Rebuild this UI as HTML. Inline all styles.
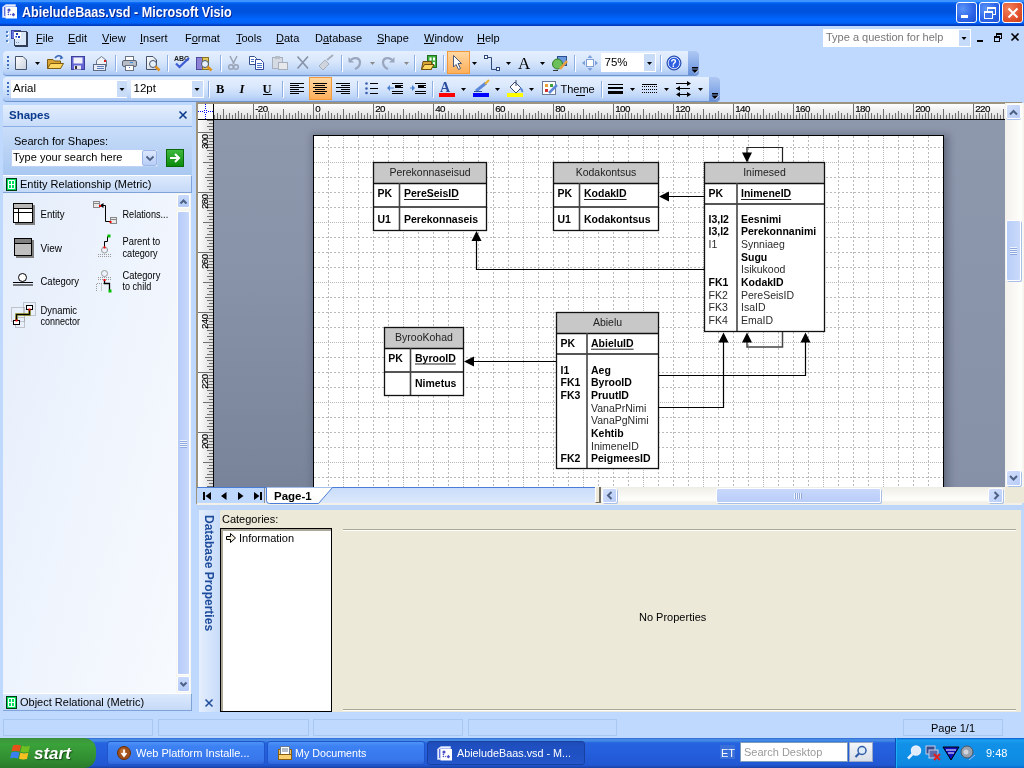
<!DOCTYPE html>
<html><head><meta charset="utf-8">
<style>
*{box-sizing:border-box;margin:0;padding:0}
html,body{width:1024px;height:768px;overflow:hidden}
body{will-change:transform}
body{position:relative;background:#BED9FD;font-family:"Liberation Sans",sans-serif;font-size:11px;color:#000}
.a{position:absolute}
.t{position:absolute;white-space:nowrap;line-height:1}
u{text-decoration:underline;text-underline-offset:1px}
#title{left:0;top:0;width:1024px;height:26px;background:linear-gradient(#3F93FF 0px,#3F93FF 1.5px,#0A6CF8 2.5px,#0058E6 4px,#0053DF 8px,#0052DD 12px,#005CF0 16px,#0066FF 19px,#0062F8 23px,#0050DD 24px,#003CC0 25px,#003CC0 26px)}
#title .t{color:#fff;font-weight:bold;font-size:14.4px;left:22px;top:5px;text-shadow:1px 1px 0 #0A1E8A;transform:scaleX(0.875);transform-origin:0 0}
.wbtn{position:absolute;top:2px;width:21px;height:21px;border:1px solid #fff;border-radius:3px;background:radial-gradient(circle at 30% 30%,#5B94F8,#2B63E8 60%,#1E4FD0)}
.wbtn.close{background:radial-gradient(circle at 30% 30%,#F0805A,#E2522C 60%,#C73E18)}
.tb{position:absolute;border-radius:4px 4px 4px 4px;background:linear-gradient(#E4EFFE 0%,#DAE8FC 40%,#C4DAF9 75%,#A9C7F3 100%);border-bottom:1px solid #6F93CF}
.chev{position:absolute;right:0;top:0;bottom:0;width:11px;border-radius:0 4px 4px 0;background:linear-gradient(#AFC8F3,#8CAEE9 50%,#6790DA)}
.grip{position:absolute;left:4px;top:5px;width:2px;height:13px;background:repeating-linear-gradient(#3B6DC2 0 2px,transparent 2px 4px)}
.sep{position:absolute;top:5px;width:1px;height:15px;background:#6A8CCB;box-shadow:1px 0 0 #fff}
.dd{position:absolute;width:0;height:0;border-left:3px solid transparent;border-right:3px solid transparent;border-top:3px solid #000}
</style></head><body>

<!-- TITLE BAR -->
<div id="title" class="a">
  <svg class="a" style="left:0;top:0" width="20" height="20" viewBox="0 0 20 20">
    <path d="M2.5 7L6 4.5H15.5V6.5H5.5V17.5H2.5Z" fill="#E8EEFF" stroke="#C8D4F8" stroke-width="0.6"/>
    <rect x="4" y="7" width="1.6" height="9" fill="#5A70E0"/>
    <rect x="5.5" y="7" width="11.5" height="11.5" fill="#fff"/>
    <circle cx="9" cy="10" r="1.6" fill="#4A50C8"/>
    <circle cx="8.4" cy="12.4" r="0.8" fill="#4A50C8"/>
    <circle cx="8.4" cy="14.5" r="0.8" fill="#4A50C8"/><circle cx="10.5" cy="14.5" r="0.7" fill="#6A70D8"/>
    <path d="M13.4 12.8L15.2 14.7L13.4 16.6L11.6 14.7Z" fill="#4A50C8"/>
  </svg>
  <div class="t">AbieludeBaas.vsd - Microsoft Visio</div>
  <div class="wbtn" style="left:956px"><div class="a" style="left:4px;top:12px;width:7px;height:3px;background:#fff"></div></div>
  <div class="wbtn" style="left:979px"><div class="a" style="left:7px;top:4px;width:9px;height:8px;border:1px solid #fff;border-top-width:2px"></div><div class="a" style="left:4px;top:8px;width:9px;height:8px;border:1px solid #fff;border-top-width:2px;background:#3A70EC"></div></div>
  <div class="wbtn close" style="left:1002px"><svg class="a" style="left:4px;top:4px" width="12" height="12"><path d="M1.5 1.5L10.5 10.5M10.5 1.5L1.5 10.5" stroke="#fff" stroke-width="2"/></svg></div>
</div>

<!-- MENU BAR -->
<div class="a" style="left:0;top:26px;width:1024px;height:25px;background:#BED9FD">
  <div class="a" style="left:6px;top:5px;width:2px;height:2px;background:#4F7FC8;box-shadow:1px 1px 0 #fff,0 4px 0 #4F7FC8,1px 5px 0 #fff,0 9px 0 #4F7FC8,1px 10px 0 #fff"></div>
  <svg class="a" style="left:11px;top:3px" width="18" height="18" viewBox="0 0 18 18">
    <rect x="0.5" y="1.5" width="9" height="8" fill="#6A78E0" stroke="#3C44B0"/>
    <rect x="3.5" y="2.5" width="12" height="14" fill="#D8E6FA" stroke="#3A4A64" stroke-width="1"/>
    <path d="M16 3V17H4" stroke="#2E3C54" stroke-width="2" fill="none"/>
    <rect x="3" y="3" width="7" height="7" fill="#fff"/>
    <rect x="5" y="4" width="2" height="2" fill="#1A3AC0"/><rect x="4.5" y="7" width="1.5" height="1.5" fill="#1A3AC0"/><rect x="7" y="7" width="2" height="2" fill="#1A3AC0"/>
    <path d="M5 13.5h1M7 13.5h1" stroke="#8090B0"/>
  </svg>
  <div class="t" style="left:36px;top:7px"><u>F</u>ile</div>
  <div class="t" style="left:68px;top:7px"><u>E</u>dit</div>
  <div class="t" style="left:102px;top:7px"><u>V</u>iew</div>
  <div class="t" style="left:140px;top:7px"><u>I</u>nsert</div>
  <div class="t" style="left:185px;top:7px">F<u>o</u>rmat</div>
  <div class="t" style="left:236px;top:7px"><u>T</u>ools</div>
  <div class="t" style="left:276px;top:7px"><u>D</u>ata</div>
  <div class="t" style="left:315px;top:7px">D<u>a</u>tabase</div>
  <div class="t" style="left:377px;top:7px"><u>S</u>hape</div>
  <div class="t" style="left:424px;top:7px"><u>W</u>indow</div>
  <div class="t" style="left:477px;top:7px"><u>H</u>elp</div>
  <div class="a" style="left:823px;top:3px;width:148px;height:18px;background:#fff;border:1px solid #fff"></div>
  <div class="t" style="left:826px;top:6px;color:#777">Type a question for help</div>
  <div class="a" style="left:959px;top:4px;width:11px;height:16px;background:#C6DBFA"></div>
  <svg class="a" style="left:960px;top:10px" width="8" height="5"><path d="M1.5 1h5l-2.5 3z" fill="#000"/></svg>
  <svg class="a" style="left:975px;top:6px" width="48" height="12">
    <rect x="2" y="8" width="6" height="2" fill="#000"/>
    <rect x="19.5" y="4.5" width="5" height="5" fill="none" stroke="#000"/><rect x="19" y="4" width="6" height="2" fill="#000"/>
    <rect x="21.5" y="1.5" width="5" height="5" fill="none" stroke="#000"/><rect x="21" y="1" width="6" height="2" fill="#000"/>
    <rect x="20" y="6" width="4" height="3" fill="#BED9FD"/>
    <path d="M36.5 1.5L43.5 8.5M43.5 1.5L36.5 8.5" stroke="#000" stroke-width="1.6"/>
  </svg>
</div>

<!-- TOOLBAR 1 -->
<div class="tb" style="left:3px;top:51px;width:696px;height:25px"><div class="grip"></div><div class="chev"></div></div>
<!-- TOOLBAR 2 -->
<div class="tb" style="left:3px;top:77px;width:717px;height:25px"><div class="grip"></div><div class="chev"></div></div>
<svg class="a" style="left:0;top:51px" width="724" height="51" viewBox="0 51 724 51" font-family="Liberation Sans">
<defs>
 <linearGradient id="hl" x1="0" y1="0" x2="0" y2="1"><stop offset="0" stop-color="#FFD8A4"/><stop offset="1" stop-color="#FFAE58"/></linearGradient>
 <linearGradient id="fold" x1="0" y1="0" x2="0" y2="1"><stop offset="0" stop-color="#FFE9A0"/><stop offset="1" stop-color="#E0A630"/></linearGradient>
 <linearGradient id="pg" x1="0" y1="0" x2="1" y2="1"><stop offset="0" stop-color="#fff"/><stop offset="1" stop-color="#C8D0DC"/></linearGradient>
</defs>
<!-- TB1 row center 63 -->
<!-- new -->
<path d="M15.5 56.5H23L26.5 60V69.5H15.5Z" fill="url(#pg)" stroke="#44536B"/>
<path d="M35 62h5l-2.5 3z" fill="#000"/>
<!-- open -->
<path d="M47.5 59.5H53L54.5 61H60.5V68.5H47.5Z" fill="#D9A634" stroke="#7E5A12"/>
<path d="M47.5 68.5L50.5 63.5H63.5L60.5 68.5Z" fill="#FFD862" stroke="#7E5A12"/>
<path d="M55 58Q58 54 62 57" fill="none" stroke="#3966B8" stroke-width="1.5"/><path d="M60.5 56L63.5 58L60 59.5Z" fill="#3966B8"/>
<!-- save -->
<rect x="71.5" y="56.5" width="13" height="13" fill="#6466D6" stroke="#3D3E9C"/>
<rect x="73.5" y="57.5" width="9" height="6" fill="#F0F0F8"/>
<rect x="74" y="65.5" width="7" height="4" fill="#E8E8EE"/><rect x="75" y="66" width="2" height="3" fill="#333"/>
<!-- mail -->
<path d="M96.5 60.5L101.5 56.5L106.5 60.5V66.5H96.5Z" fill="#F0F2F6" stroke="#6B7A90"/>
<rect x="104" y="60" width="2" height="2" fill="#E02020"/>
<rect x="93.5" y="64.5" width="12" height="6" fill="#E8ECF4" stroke="#5A6A84"/>
<path d="M97 66.5h7M97 68.5h7" stroke="#5A7EC0"/>
<rect x="115" y="55" width="1" height="16" fill="#8EB0E6"/><rect x="116" y="56" width="1" height="16" fill="#fff"/>
<!-- print -->
<rect x="125.5" y="56.5" width="8" height="4" fill="#fff" stroke="#6A7384"/>
<rect x="122.5" y="60.5" width="14" height="6" rx="1.5" fill="#B8BEC8" stroke="#5C6474"/>
<rect x="130" y="62" width="3" height="1" fill="#3D8AE8"/>
<rect x="125.5" y="65.5" width="8" height="5" fill="#fff" stroke="#6A7384"/>
<rect x="129" y="67" width="1" height="1" fill="#3D8AE8"/>
<!-- preview -->
<path d="M146.5 56.5H153L156.5 60V69.5H146.5Z" fill="url(#pg)" stroke="#44536B"/>
<circle cx="153" cy="64" r="3.5" fill="#E6F0FA" stroke="#44536B"/>
<path d="M155.5 66.5L159.5 70.5" stroke="#E0921E" stroke-width="2.5"/>
<rect x="167" y="55" width="1" height="16" fill="#8EB0E6"/><rect x="168" y="56" width="1" height="16" fill="#fff"/>
<!-- spelling -->
<text x="174" y="61" font-size="7" font-weight="bold" fill="#222">ABC</text>
<path d="M176 63.5L179.5 67L189 58" fill="none" stroke="#3B5BD6" stroke-width="2.2"/>
<!-- research -->
<rect x="196.5" y="57.5" width="6" height="12" fill="#8C83D8" stroke="#4E4A9A"/>
<rect x="202.5" y="57.5" width="6" height="12" fill="#E2C660" stroke="#8B7420"/>
<circle cx="205" cy="64" r="3.5" fill="#E6F0FA" stroke="#44536B"/>
<path d="M207.5 66.5L211.5 70.5" stroke="#E0921E" stroke-width="2.5"/>
<rect x="220" y="55" width="1" height="16" fill="#8EB0E6"/><rect x="221" y="56" width="1" height="16" fill="#fff"/>
<!-- cut disabled -->
<path d="M230 56L234 64M237 56L233 64" stroke="#9AA3B4" stroke-width="1.5"/>
<circle cx="231" cy="67" r="2.3" fill="none" stroke="#9AA3B4" stroke-width="1.5"/><circle cx="236" cy="67" r="2.3" fill="none" stroke="#9AA3B4" stroke-width="1.5"/>
<!-- copy -->
<path d="M249.5 56.5H254.5L256.5 58.5V64.5H249.5Z" fill="#fff" stroke="#38508A"/>
<path d="M255.5 59.5H260.5L263.5 62.5V69.5H255.5Z" fill="#fff" stroke="#2F4A9C"/>
<path d="M257 63.5h5M257 65.5h5M257 67.5h5" stroke="#4A72C8"/>
<path d="M251 59.5h3M251 61.5h3" stroke="#4A72C8"/>
<!-- paste disabled -->
<rect x="272.5" y="57.5" width="10" height="11" fill="#D6DAE2" stroke="#A8AFBC"/>
<rect x="275" y="56" width="5" height="3" fill="#B8BEC8"/>
<rect x="278.5" y="62.5" width="9" height="7" fill="#E6E8EC" stroke="#A8AFBC"/>
<!-- delete disabled -->
<path d="M297.5 56.5L308 68.5M308 56.5L297.5 68.5" stroke="#8792A8" stroke-width="1.6"/>
<!-- format painter disabled -->
<path d="M319 66L325 60L329 64L323 70Z" fill="#D0D4DC" stroke="#A8AFBC"/>
<path d="M327 60L333 55" stroke="#A8AFBC" stroke-width="2"/>
<rect x="341" y="55" width="1" height="16" fill="#8EB0E6"/><rect x="342" y="56" width="1" height="16" fill="#fff"/>
<!-- undo -->
<path d="M351 59.5Q359 56 360 62Q360 67 355 69" fill="none" stroke="#9AA6BE" stroke-width="2.2"/>
<path d="M348.5 57V62.5H354Z" fill="#9AA6BE"/>
<path d="M370 62h5l-2.5 3z" fill="#8A8A8A"/>
<!-- redo -->
<path d="M392 59.5Q384 56 383 62Q383 67 388 69" fill="none" stroke="#9AA6BE" stroke-width="2.2"/>
<path d="M394.5 57V62.5H389Z" fill="#9AA6BE"/>
<path d="M404 62h5l-2.5 3z" fill="#8A8A8A"/>
<rect x="414" y="55" width="1" height="16" fill="#8EB0E6"/><rect x="415" y="56" width="1" height="16" fill="#fff"/>
<!-- shapes folder -->
<rect x="427.5" y="55.5" width="9" height="12" fill="#3FAE3F" stroke="#1E6E1E"/>
<path d="M429.5 57.5h2v3h-2zM433 57.5h2v3h-2zM433 62h2v3h-2z" fill="#fff"/>
<path d="M421.5 69.5L423 61.5H431.5V69.5Z" fill="#D9A634" stroke="#6E4E10"/>
<path d="M421.5 69.5L424.5 64.5H434L431 69.5Z" fill="#FFD862" stroke="#6E4E10"/>
<rect x="443" y="55" width="1" height="16" fill="#8EB0E6"/><rect x="444" y="56" width="1" height="16" fill="#fff"/>
<!-- pointer highlighted -->
<rect x="447.5" y="51.5" width="22" height="22" fill="url(#hl)" stroke="#F29A3A"/>
<path d="M453.5 55.5V67L456 64.5L458.5 69.5L460.5 68.5L458 63.5H461.5Z" fill="#fff" stroke="#465A80" stroke-linejoin="round"/>
<path d="M472 62h5l-2.5 3z" fill="#000"/>
<!-- connector -->
<rect x="484.5" y="55.5" width="3" height="3" fill="#fff" stroke="#2D4A7A"/>
<rect x="496.5" y="67.5" width="3" height="3" fill="#fff" stroke="#2D4A7A"/>
<path d="M488 57.5H491.5V69.5H496" fill="none" stroke="#2D4A7A"/>
<path d="M506 62h5l-2.5 3z" fill="#000"/>
<!-- text A -->
<text x="518" y="68.5" font-family="Liberation Serif" font-size="17" fill="#000">A</text>
<path d="M540 62h5l-2.5 3z" fill="#000"/>
<!-- fill shape -->
<rect x="557.5" y="56.5" width="9" height="9" fill="#6A98E0" stroke="#2A4E8E"/>
<circle cx="557.5" cy="64" r="5" fill="#6CC05A" stroke="#2E7A22"/>
<path d="M560 69L567 61" stroke="#E8A040" stroke-width="2.5"/>
<path d="M553 70.5h5" stroke="#333"/>
<rect x="574" y="55" width="1" height="16" fill="#8EB0E6"/><rect x="575" y="56" width="1" height="16" fill="#fff"/>
<!-- pan -->
<rect x="586.5" y="59.5" width="7" height="7" fill="#fff" stroke="#7DA0D8"/>
<path d="M590 55L592.5 58H587.5Z M590 71L592.5 68H587.5Z M582 63L585 60.5V65.5Z M598 63L595 60.5V65.5Z" fill="#7DA0D8"/>
<!-- zoom box -->
<rect x="601" y="53" width="55" height="19" fill="#fff"/>
<rect x="644" y="54" width="11" height="17" fill="#C8DCF8"/>
<path d="M647 62h5l-2.5 3z" fill="#000"/>
<text x="604.5" y="66.3" font-size="11.5">75%</text>
<rect x="660" y="55" width="1" height="16" fill="#8EB0E6"/><rect x="661" y="56" width="1" height="16" fill="#fff"/>
<!-- help -->
<circle cx="674" cy="63" r="7" fill="#2E5FE0" stroke="#1B3FA0"/>
<circle cx="674" cy="63" r="5.8" fill="none" stroke="#fff" stroke-width="0.8"/>
<text x="670.5" y="67" font-size="10" font-weight="bold" fill="#fff">?</text>
<!-- chevron 1 -->
<rect x="692" y="67" width="6" height="1.5" fill="#000"/><path d="M691.5 69.5h7l-3.5 3.5z" fill="#000"/><path d="M695 73.5l4-4" stroke="#fff" stroke-width="0.8"/>

<!-- TB2 row center 89 -->
<rect x="11" y="80" width="116" height="18" fill="#fff"/>
<rect x="117" y="81" width="10" height="16" fill="#C8DCF8"/>
<path d="M119.5 88h5l-2.5 3z" fill="#000"/>
<text x="13" y="91.7" font-size="11.5">Arial</text>
<rect x="131" y="80" width="73" height="18" fill="#fff"/>
<rect x="192" y="81" width="11" height="16" fill="#C8DCF8"/>
<path d="M194.5 88h5l-2.5 3z" fill="#000"/>
<text x="133.5" y="91.7" font-size="11.5">12pt</text>
<rect x="208" y="81" width="1" height="16" fill="#8EB0E6"/><rect x="209" y="82" width="1" height="16" fill="#fff"/>
<text x="216" y="93" font-family="Liberation Serif" font-weight="bold" font-size="12.5">B</text>
<text x="239.5" y="93" font-family="Liberation Serif" font-style="italic" font-weight="bold" font-size="12.5">I</text>
<text x="262.5" y="93" font-family="Liberation Serif" font-weight="bold" font-size="12.5">U</text>
<rect x="263" y="94" width="9" height="1" fill="#000"/>
<rect x="282" y="81" width="1" height="16" fill="#8EB0E6"/><rect x="283" y="82" width="1" height="16" fill="#fff"/>
<!-- align left -->
<path d="M290 83.5h14M290 85.5h9M290 87.5h14M290 89.5h9M290 91.5h14M290 93.5h9" stroke="#000"/>
<!-- align center highlight -->
<rect x="309.5" y="77.5" width="22" height="22" fill="url(#hl)" stroke="#F29A3A"/>
<path d="M313 83.5h14M315 85.5h10M313 87.5h14M315 89.5h10M313 91.5h14M315 93.5h10" stroke="#000"/>
<!-- align right -->
<path d="M336 83.5h14M341 85.5h9M336 87.5h14M341 89.5h9M336 91.5h14M341 93.5h9" stroke="#000"/>
<rect x="357" y="81" width="1" height="16" fill="#8EB0E6"/><rect x="358" y="82" width="1" height="16" fill="#fff"/>
<!-- bullets -->
<circle cx="366.5" cy="83.5" r="1.3" fill="#3A5DB0"/><circle cx="366.5" cy="88.5" r="1.3" fill="#3A5DB0"/><circle cx="366.5" cy="93" r="1.3" fill="#3A5DB0"/>
<path d="M370 83.5h8M370 88.5h8M370 93.5h8" stroke="#000" stroke-width="1.2"/>
<!-- decrease indent -->
<path d="M392 83.5h11M395 85.5h8M395 87.5h8M392 91.5h11M392 93.5h11" stroke="#000"/>
<rect x="395" y="86" width="6" height="2" fill="#000"/>
<path d="M387 88l3-3v6z" fill="#4A7ED6"/><path d="M389 88h5" stroke="#4A7ED6"/>
<!-- increase indent -->
<path d="M415 83.5h11M418 85.5h8M418 87.5h8M415 91.5h11M415 93.5h11" stroke="#000"/>
<rect x="418" y="86" width="6" height="2" fill="#000"/>
<path d="M415 88l-3-3v6z" fill="#4A7ED6"/><path d="M410 88h4" stroke="#4A7ED6"/>
<rect x="432" y="81" width="1" height="16" fill="#8EB0E6"/><rect x="433" y="82" width="1" height="16" fill="#fff"/>
<!-- font color -->
<text x="440" y="91.5" font-family="Liberation Serif" font-weight="bold" font-size="14" fill="#2A4C9C">A</text>
<rect x="439" y="93" width="16" height="4" fill="#FF0000"/>
<path d="M461 88h5l-2.5 3z" fill="#000"/>
<!-- line color -->
<path d="M476 91L486 83" stroke="#5C88D8" stroke-width="3"/>
<path d="M485 84L489 80" stroke="#E8B030" stroke-width="2"/>
<path d="M474 91.5h8" stroke="#2A4C9C"/>
<rect x="473" y="93" width="16" height="4" fill="#0000FF"/>
<path d="M495 88h5l-2.5 3z" fill="#000"/>
<!-- fill color -->
<path d="M510 87L515 82L521 88L516 93Z" fill="#fff" stroke="#3A4A6A"/>
<path d="M516 80V86" stroke="#3A4A6A"/>
<path d="M520 88Q523 90 522 92" stroke="#5C88D8" stroke-width="2" fill="none"/>
<rect x="507" y="93" width="16" height="4" fill="#FFFF00"/>
<path d="M529 88h5l-2.5 3z" fill="#000"/>
<!-- theme -->
<rect x="542.5" y="81.5" width="13" height="13" fill="#fff" stroke="#6A7A96"/>
<rect x="545" y="84" width="3" height="3" fill="#E8A030"/><rect x="550" y="84" width="3" height="3" fill="#40A040"/><rect x="545" y="89" width="3" height="3" fill="#D03030"/>
<path d="M549 93L557 85" stroke="#5C88D8" stroke-width="2.5"/>
<text x="560.5" y="93" font-size="11">Theme</text>
<rect x="576" y="95" width="9" height="1" fill="#000"/>
<rect x="601" y="81" width="1" height="16" fill="#8EB0E6"/><rect x="602" y="82" width="1" height="16" fill="#fff"/>
<!-- line weight -->
<rect x="608" y="84" width="15" height="1" fill="#000"/><rect x="608" y="87" width="15" height="2" fill="#000"/><rect x="608" y="91" width="15" height="3" fill="#000"/>
<path d="M630 88h5l-2.5 3z" fill="#000"/>
<!-- line pattern -->
<rect x="642" y="84" width="15" height="1" fill="#000"/>
<path d="M642 86.5h15M642 89.5h15M642 92.5h15" stroke="#000" stroke-dasharray="1 1"/>
<path d="M664 88h5l-2.5 3z" fill="#000"/>
<!-- line ends -->
<path d="M676 83.5h12M676 88.5h14M677 94.5h13" stroke="#000" stroke-width="1.2"/>
<path d="M691 83.5l-4-2.5v5z M676 88.5l4-2.5v5z M676 94.5l4-2.5v5z M691 94.5l-4-2.5v5z" fill="#000"/>
<path d="M698 88h5l-2.5 3z" fill="#000"/>
<!-- chevron 2 -->
<rect x="712" y="93" width="6" height="1.5" fill="#000"/><path d="M711.5 95.5h7l-3.5 3.5z" fill="#000"/><path d="M715 99.5l4-4" stroke="#fff" stroke-width="0.8"/>
</svg>



<!-- SHAPES PANE -->
<div class="a" style="left:0;top:102px;width:197px;height:610px;background:#BED9FD"></div>
<div class="a" style="left:3px;top:105px;width:189px;height:22px;background:linear-gradient(#E3EEFD,#C8DCF9);border-bottom:1px solid #8CAEE6">
  <div class="t" style="left:6px;top:5px;font-weight:bold;font-size:11.5px;color:#0B3A8C">Shapes</div>
  <svg class="a" style="left:175px;top:5px" width="10" height="10"><path d="M1.5 1.5L8.5 8.5M8.5 1.5L1.5 8.5" stroke="#0B3A8C" stroke-width="1.6"/></svg>
</div>
<div class="a" style="left:3px;top:127px;width:189px;height:48px;background:linear-gradient(#C9DDF9,#A9C8F1)">
  <div class="t" style="left:11px;top:9px">Search for Shapes:</div>
  <div class="a" style="left:8px;top:22px;width:147px;height:18px;background:#fff;border:1px solid #BCD3F5"></div>
  <div class="t" style="left:10px;top:25px">Type your search here</div>
  <div class="a" style="left:139px;top:23px;width:15px;height:16px;background:linear-gradient(#DDE8FD,#B7CDF6);border:1px solid #9CB7E8;border-radius:2px"></div>
  <svg class="a" style="left:142px;top:28px" width="10" height="7"><path d="M1.5 1.5L5 5L8.5 1.5" stroke="#4D6185" stroke-width="1.8" fill="none"/></svg>
  <div class="a" style="left:163px;top:22px;width:18px;height:18px;background:linear-gradient(#3FB93F,#0A8A0A);border:1px solid #0A6A0A"></div>
  <svg class="a" style="left:165px;top:24px" width="14" height="14"><path d="M2 7H11M7 3L11 7L7 11" stroke="#fff" stroke-width="2" fill="none"/></svg>
</div>
<div class="a" style="left:3px;top:175px;width:189px;height:18px;background:linear-gradient(#DCE9FC,#C5DAF8);border-top:1px solid #fff;border-bottom:1px solid #7FA3D8;border-right:1px solid #7FA3D8">
  <svg class="a" style="left:3px;top:2px" width="11" height="13"><rect x="0.5" y="0.5" width="10" height="12" fill="#00E060" stroke="#003A10"/><path d="M2.5 2.5h6v8h-6zM5.5 2.5v8M2.5 6.5h6" stroke="#fff" fill="none"/></svg>
  <div class="t" style="left:17px;top:3px">Entity Relationship (Metric)</div>
</div>
<div class="a" style="left:3px;top:193px;width:173px;height:500px;background:linear-gradient(105deg,#E4EDFB 0%,#EEF4FD 45%,#F7FAFE 100%)"></div>
<svg class="a" style="left:3px;top:193px" width="173" height="140" viewBox="3 193 173 140" font-family="Liberation Sans" font-size="11">
<!-- Entity icon -->
<rect x="15" y="205" width="20" height="20" fill="#808080"/>
<rect x="13.5" y="203.5" width="19" height="19" fill="#fff" stroke="#000"/>
<rect x="14" y="204" width="18" height="4" fill="#B8B8B8"/>
<path d="M14 208.5h18M14 212.5h18M18.5 208.5v14" stroke="#000"/>
<text x="40.5" y="217.5" textLength="24" lengthAdjust="spacingAndGlyphs">Entity</text>
<!-- Relationship icon -->
<rect x="93.5" y="201.5" width="6" height="6" fill="#E8E8E8" stroke="#888"/>
<path d="M94 203.5h5" stroke="#888"/>
<rect x="110.5" y="217.5" width="6" height="6" fill="#E8E8E8" stroke="#888"/>
<path d="M111 219.5h5" stroke="#888"/>
<path d="M101 205.5H105.5V221.5H110" fill="none" stroke="#000"/>
<path d="M99.5 205.5l4-2.5v5z" fill="#000"/>
<rect x="99" y="205" width="2" height="2" fill="#f00"/><rect x="109.5" y="221" width="2" height="2" fill="#f00"/>
<text x="122.5" y="217.5" textLength="45.7" lengthAdjust="spacingAndGlyphs">Relations...</text>
<!-- View icon -->
<rect x="16" y="240" width="18" height="18" fill="#808080"/>
<rect x="14.5" y="238.5" width="17" height="17" fill="#C0C0C0" stroke="#000"/>
<rect x="15" y="239" width="16" height="4" fill="#808080"/>
<path d="M15 243.5h16" stroke="#000"/>
<text x="40.5" y="251.5" textLength="21.5" lengthAdjust="spacingAndGlyphs">View</text>
<!-- Parent to category icon -->
<path d="M104.5 247V241.5H107.5V236.5H109" fill="none" stroke="#000"/>
<rect x="107.5" y="234.5" width="3" height="3" fill="#00C000"/>
<circle cx="104.5" cy="250" r="3" fill="none" stroke="#999"/>
<path d="M98 254.5h14M98 256.5h14" stroke="#999" stroke-dasharray="1 1"/>
<rect x="103.5" y="246.5" width="2" height="2" fill="#f00"/>
<text x="122.5" y="245" textLength="37.8" lengthAdjust="spacingAndGlyphs">Parent to</text>
<text x="122.5" y="256.5" textLength="35" lengthAdjust="spacingAndGlyphs">category</text>
<!-- Category icon -->
<circle cx="22.5" cy="277.5" r="4" fill="#fff" stroke="#000"/>
<path d="M13 282.5h20M13 285h20" stroke="#000"/>
<text x="40.5" y="285" textLength="38.5" lengthAdjust="spacingAndGlyphs">Category</text>
<!-- Category to child -->
<circle cx="104.5" cy="273.5" r="3" fill="none" stroke="#999"/>
<path d="M98 277.5h14M98 279.5h14" stroke="#999" stroke-dasharray="1 1"/>
<path d="M96.5 291V283.5H104.5M101.5 283.5V291" fill="none" stroke="#999" stroke-dasharray="1 1"/>
<path d="M104.5 280V283.5H109.5V290" fill="none" stroke="#000" stroke-width="1.3"/>
<rect x="103.5" y="279" width="2" height="2" fill="#f00"/>
<rect x="108.5" y="289.5" width="3" height="3" fill="#00C000"/>
<text x="122.5" y="279" textLength="37.8" lengthAdjust="spacingAndGlyphs">Category</text>
<text x="122.5" y="290" textLength="28.7" lengthAdjust="spacingAndGlyphs">to child</text>
<!-- Dynamic connector -->
<rect x="11.5" y="307.5" width="13" height="14" fill="none" stroke="#999" stroke-dasharray="1 1"/>
<rect x="23.5" y="302.5" width="12" height="13" fill="none" stroke="#999" stroke-dasharray="1 1"/>
<rect x="15.5" y="317.5" width="9" height="10" fill="none" stroke="#999" stroke-dasharray="1 1"/>
<path d="M29.5 309V314.5H16.5V321" fill="none" stroke="#7A7A10" stroke-width="2.5"/>
<path d="M29.5 309V314.5H16.5V321" fill="none" stroke="#000" stroke-width="1"/>
<rect x="26.5" y="305.5" width="6" height="4" fill="#fff" stroke="#000"/>
<rect x="13.5" y="320.5" width="6" height="4" fill="#fff" stroke="#000"/>
<rect x="28.5" y="308.5" width="2" height="2" fill="#f00"/><rect x="15.5" y="319.5" width="2" height="2" fill="#f00"/>
<text x="40.5" y="313.5" textLength="36.5" lengthAdjust="spacingAndGlyphs">Dynamic</text>
<text x="40.5" y="324.5" textLength="39.5" lengthAdjust="spacingAndGlyphs">connector</text>
</svg>

<div class="a" style="left:176px;top:193px;width:15px;height:500px;background:#F6F6F0"></div>
<div class="a" style="left:177px;top:194px;width:13px;height:14px;background:linear-gradient(#C8D9FC,#B4CAF7);border:1px solid #fff;border-radius:2px"></div>
<div class="a" style="left:177px;top:211px;width:13px;height:464px;background:linear-gradient(90deg,#B5CBF8,#C9D9FB);border:1px solid #fff;border-radius:2px"></div>
<div class="a" style="left:177px;top:676px;width:13px;height:16px;background:linear-gradient(#C8D9FC,#B4CAF7);border:1px solid #fff;border-radius:2px"></div>
<svg class="a" style="left:177px;top:194px" width="13" height="500" viewBox="177 194 13 500">
 <path d="M180.5 203.5L183.5 200.5L186.5 203.5" stroke="#4D6185" stroke-width="2" fill="none"/>
 <path d="M180.5 682.5L183.5 685.5L186.5 682.5" stroke="#4D6185" stroke-width="2" fill="none"/>
 <path d="M180 440.5h7M180 442.5h7M180 444.5h7M180 446.5h7" stroke="#EEF4FE"/>
 <path d="M180 441.5h7M180 443.5h7M180 445.5h7M180 447.5h7" stroke="#8FA9DE"/>
</svg>
<div class="a" style="left:3px;top:693px;width:189px;height:18px;background:linear-gradient(#DCE9FC,#C5DAF8);border-top:1px solid #fff;border-bottom:1px solid #7FA3D8;border-right:1px solid #7FA3D8">
  <svg class="a" style="left:3px;top:2px" width="11" height="13"><rect x="0.5" y="0.5" width="10" height="12" fill="#00E060" stroke="#003A10"/><path d="M2.5 2.5h6v8h-6zM5.5 2.5v8M2.5 6.5h6" stroke="#fff" fill="none"/></svg>
  <div class="t" style="left:17px;top:3px">Object Relational (Metric)</div>
</div>

<!-- RULER FRAME / CANVAS -->
<div class="a" style="left:196px;top:102px;width:826px;height:402px;background:#9D9480"></div>
<svg class="a" style="left:198px;top:104px" width="807" height="383" viewBox="198 104 807 383">
  <defs>
    <linearGradient id="rg" x1="0" y1="0" x2="0" y2="1"><stop offset="0" stop-color="#fff"/><stop offset="1" stop-color="#DCDCDC"/></linearGradient>
    <linearGradient id="vrg" x1="0" y1="0" x2="1" y2="0"><stop offset="0" stop-color="#fff"/><stop offset="1" stop-color="#DCDCDC"/></linearGradient>
  </defs>
  <rect x="198" y="104" width="807" height="15" fill="url(#rg)"/>
  <rect x="198" y="104" width="15" height="383" fill="url(#vrg)"/>
  <rect x="198" y="104" width="15" height="15" fill="#fff"/>
  <g fill="#707070"><g fill="#707070"><rect x="214" y="115" width="1" height="4"/>
<rect x="217" y="113" width="1" height="6"/>
<rect x="220" y="115" width="1" height="4"/>
<rect x="223" y="109" width="1" height="10"/>
<rect x="226" y="115" width="1" height="4"/>
<rect x="229" y="113" width="1" height="6"/>
<rect x="232" y="115" width="1" height="4"/>
<rect x="235" y="113" width="1" height="6"/>
<rect x="238" y="111" width="1" height="8"/>
<rect x="241" y="113" width="1" height="6"/>
<rect x="244" y="115" width="1" height="4"/>
<rect x="247" y="113" width="1" height="6"/>
<rect x="250" y="115" width="1" height="4"/>
<rect x="253" y="104" width="1" height="15"/>
<rect x="256" y="115" width="1" height="4"/>
<rect x="259" y="113" width="1" height="6"/>
<rect x="262" y="115" width="1" height="4"/>
<rect x="265" y="113" width="1" height="6"/>
<rect x="268" y="111" width="1" height="8"/>
<rect x="271" y="113" width="1" height="6"/>
<rect x="274" y="115" width="1" height="4"/>
<rect x="277" y="113" width="1" height="6"/>
<rect x="280" y="115" width="1" height="4"/>
<rect x="283" y="109" width="1" height="10"/>
<rect x="286" y="115" width="1" height="4"/>
<rect x="289" y="113" width="1" height="6"/>
<rect x="292" y="115" width="1" height="4"/>
<rect x="295" y="113" width="1" height="6"/>
<rect x="298" y="111" width="1" height="8"/>
<rect x="301" y="113" width="1" height="6"/>
<rect x="304" y="115" width="1" height="4"/>
<rect x="307" y="113" width="1" height="6"/>
<rect x="310" y="115" width="1" height="4"/>
<rect x="313" y="104" width="1" height="15"/>
<rect x="316" y="115" width="1" height="4"/>
<rect x="319" y="113" width="1" height="6"/>
<rect x="322" y="115" width="1" height="4"/>
<rect x="325" y="113" width="1" height="6"/>
<rect x="328" y="111" width="1" height="8"/>
<rect x="331" y="113" width="1" height="6"/>
<rect x="334" y="115" width="1" height="4"/>
<rect x="337" y="113" width="1" height="6"/>
<rect x="340" y="115" width="1" height="4"/>
<rect x="343" y="109" width="1" height="10"/>
<rect x="346" y="115" width="1" height="4"/>
<rect x="349" y="113" width="1" height="6"/>
<rect x="352" y="115" width="1" height="4"/>
<rect x="355" y="113" width="1" height="6"/>
<rect x="358" y="111" width="1" height="8"/>
<rect x="361" y="113" width="1" height="6"/>
<rect x="364" y="115" width="1" height="4"/>
<rect x="367" y="113" width="1" height="6"/>
<rect x="370" y="115" width="1" height="4"/>
<rect x="373" y="104" width="1" height="15"/>
<rect x="376" y="115" width="1" height="4"/>
<rect x="379" y="113" width="1" height="6"/>
<rect x="382" y="115" width="1" height="4"/>
<rect x="385" y="113" width="1" height="6"/>
<rect x="388" y="111" width="1" height="8"/>
<rect x="391" y="113" width="1" height="6"/>
<rect x="394" y="115" width="1" height="4"/>
<rect x="397" y="113" width="1" height="6"/>
<rect x="400" y="115" width="1" height="4"/>
<rect x="403" y="109" width="1" height="10"/>
<rect x="406" y="115" width="1" height="4"/>
<rect x="409" y="113" width="1" height="6"/>
<rect x="412" y="115" width="1" height="4"/>
<rect x="415" y="113" width="1" height="6"/>
<rect x="418" y="111" width="1" height="8"/>
<rect x="421" y="113" width="1" height="6"/>
<rect x="424" y="115" width="1" height="4"/>
<rect x="427" y="113" width="1" height="6"/>
<rect x="430" y="115" width="1" height="4"/>
<rect x="433" y="104" width="1" height="15"/>
<rect x="436" y="115" width="1" height="4"/>
<rect x="439" y="113" width="1" height="6"/>
<rect x="442" y="115" width="1" height="4"/>
<rect x="445" y="113" width="1" height="6"/>
<rect x="448" y="111" width="1" height="8"/>
<rect x="451" y="113" width="1" height="6"/>
<rect x="454" y="115" width="1" height="4"/>
<rect x="457" y="113" width="1" height="6"/>
<rect x="460" y="115" width="1" height="4"/>
<rect x="463" y="109" width="1" height="10"/>
<rect x="466" y="115" width="1" height="4"/>
<rect x="469" y="113" width="1" height="6"/>
<rect x="472" y="115" width="1" height="4"/>
<rect x="475" y="113" width="1" height="6"/>
<rect x="478" y="111" width="1" height="8"/>
<rect x="481" y="113" width="1" height="6"/>
<rect x="484" y="115" width="1" height="4"/>
<rect x="487" y="113" width="1" height="6"/>
<rect x="490" y="115" width="1" height="4"/>
<rect x="493" y="104" width="1" height="15"/>
<rect x="496" y="115" width="1" height="4"/>
<rect x="499" y="113" width="1" height="6"/>
<rect x="502" y="115" width="1" height="4"/>
<rect x="505" y="113" width="1" height="6"/>
<rect x="508" y="111" width="1" height="8"/>
<rect x="511" y="113" width="1" height="6"/>
<rect x="514" y="115" width="1" height="4"/>
<rect x="517" y="113" width="1" height="6"/>
<rect x="520" y="115" width="1" height="4"/>
<rect x="523" y="109" width="1" height="10"/>
<rect x="526" y="115" width="1" height="4"/>
<rect x="529" y="113" width="1" height="6"/>
<rect x="532" y="115" width="1" height="4"/>
<rect x="535" y="113" width="1" height="6"/>
<rect x="538" y="111" width="1" height="8"/>
<rect x="541" y="113" width="1" height="6"/>
<rect x="544" y="115" width="1" height="4"/>
<rect x="547" y="113" width="1" height="6"/>
<rect x="550" y="115" width="1" height="4"/>
<rect x="553" y="104" width="1" height="15"/>
<rect x="556" y="115" width="1" height="4"/>
<rect x="559" y="113" width="1" height="6"/>
<rect x="562" y="115" width="1" height="4"/>
<rect x="565" y="113" width="1" height="6"/>
<rect x="568" y="111" width="1" height="8"/>
<rect x="571" y="113" width="1" height="6"/>
<rect x="574" y="115" width="1" height="4"/>
<rect x="577" y="113" width="1" height="6"/>
<rect x="580" y="115" width="1" height="4"/>
<rect x="583" y="109" width="1" height="10"/>
<rect x="586" y="115" width="1" height="4"/>
<rect x="589" y="113" width="1" height="6"/>
<rect x="592" y="115" width="1" height="4"/>
<rect x="595" y="113" width="1" height="6"/>
<rect x="598" y="111" width="1" height="8"/>
<rect x="601" y="113" width="1" height="6"/>
<rect x="604" y="115" width="1" height="4"/>
<rect x="607" y="113" width="1" height="6"/>
<rect x="610" y="115" width="1" height="4"/>
<rect x="613" y="104" width="1" height="15"/>
<rect x="616" y="115" width="1" height="4"/>
<rect x="619" y="113" width="1" height="6"/>
<rect x="622" y="115" width="1" height="4"/>
<rect x="625" y="113" width="1" height="6"/>
<rect x="628" y="111" width="1" height="8"/>
<rect x="631" y="113" width="1" height="6"/>
<rect x="634" y="115" width="1" height="4"/>
<rect x="637" y="113" width="1" height="6"/>
<rect x="640" y="115" width="1" height="4"/>
<rect x="643" y="109" width="1" height="10"/>
<rect x="646" y="115" width="1" height="4"/>
<rect x="649" y="113" width="1" height="6"/>
<rect x="652" y="115" width="1" height="4"/>
<rect x="655" y="113" width="1" height="6"/>
<rect x="658" y="111" width="1" height="8"/>
<rect x="661" y="113" width="1" height="6"/>
<rect x="664" y="115" width="1" height="4"/>
<rect x="667" y="113" width="1" height="6"/>
<rect x="670" y="115" width="1" height="4"/>
<rect x="673" y="104" width="1" height="15"/>
<rect x="676" y="115" width="1" height="4"/>
<rect x="679" y="113" width="1" height="6"/>
<rect x="682" y="115" width="1" height="4"/>
<rect x="685" y="113" width="1" height="6"/>
<rect x="688" y="111" width="1" height="8"/>
<rect x="691" y="113" width="1" height="6"/>
<rect x="694" y="115" width="1" height="4"/>
<rect x="697" y="113" width="1" height="6"/>
<rect x="700" y="115" width="1" height="4"/>
<rect x="703" y="109" width="1" height="10"/>
<rect x="706" y="115" width="1" height="4"/>
<rect x="709" y="113" width="1" height="6"/>
<rect x="712" y="115" width="1" height="4"/>
<rect x="715" y="113" width="1" height="6"/>
<rect x="718" y="111" width="1" height="8"/>
<rect x="721" y="113" width="1" height="6"/>
<rect x="724" y="115" width="1" height="4"/>
<rect x="727" y="113" width="1" height="6"/>
<rect x="730" y="115" width="1" height="4"/>
<rect x="733" y="104" width="1" height="15"/>
<rect x="736" y="115" width="1" height="4"/>
<rect x="739" y="113" width="1" height="6"/>
<rect x="742" y="115" width="1" height="4"/>
<rect x="745" y="113" width="1" height="6"/>
<rect x="748" y="111" width="1" height="8"/>
<rect x="751" y="113" width="1" height="6"/>
<rect x="754" y="115" width="1" height="4"/>
<rect x="757" y="113" width="1" height="6"/>
<rect x="760" y="115" width="1" height="4"/>
<rect x="763" y="109" width="1" height="10"/>
<rect x="766" y="115" width="1" height="4"/>
<rect x="769" y="113" width="1" height="6"/>
<rect x="772" y="115" width="1" height="4"/>
<rect x="775" y="113" width="1" height="6"/>
<rect x="778" y="111" width="1" height="8"/>
<rect x="781" y="113" width="1" height="6"/>
<rect x="784" y="115" width="1" height="4"/>
<rect x="787" y="113" width="1" height="6"/>
<rect x="790" y="115" width="1" height="4"/>
<rect x="793" y="104" width="1" height="15"/>
<rect x="796" y="115" width="1" height="4"/>
<rect x="799" y="113" width="1" height="6"/>
<rect x="802" y="115" width="1" height="4"/>
<rect x="805" y="113" width="1" height="6"/>
<rect x="808" y="111" width="1" height="8"/>
<rect x="811" y="113" width="1" height="6"/>
<rect x="814" y="115" width="1" height="4"/>
<rect x="817" y="113" width="1" height="6"/>
<rect x="820" y="115" width="1" height="4"/>
<rect x="823" y="109" width="1" height="10"/>
<rect x="826" y="115" width="1" height="4"/>
<rect x="829" y="113" width="1" height="6"/>
<rect x="832" y="115" width="1" height="4"/>
<rect x="835" y="113" width="1" height="6"/>
<rect x="838" y="111" width="1" height="8"/>
<rect x="841" y="113" width="1" height="6"/>
<rect x="844" y="115" width="1" height="4"/>
<rect x="847" y="113" width="1" height="6"/>
<rect x="850" y="115" width="1" height="4"/>
<rect x="853" y="104" width="1" height="15"/>
<rect x="856" y="115" width="1" height="4"/>
<rect x="859" y="113" width="1" height="6"/>
<rect x="862" y="115" width="1" height="4"/>
<rect x="865" y="113" width="1" height="6"/>
<rect x="868" y="111" width="1" height="8"/>
<rect x="871" y="113" width="1" height="6"/>
<rect x="874" y="115" width="1" height="4"/>
<rect x="877" y="113" width="1" height="6"/>
<rect x="880" y="115" width="1" height="4"/>
<rect x="883" y="109" width="1" height="10"/>
<rect x="886" y="115" width="1" height="4"/>
<rect x="889" y="113" width="1" height="6"/>
<rect x="892" y="115" width="1" height="4"/>
<rect x="895" y="113" width="1" height="6"/>
<rect x="898" y="111" width="1" height="8"/>
<rect x="901" y="113" width="1" height="6"/>
<rect x="904" y="115" width="1" height="4"/>
<rect x="907" y="113" width="1" height="6"/>
<rect x="910" y="115" width="1" height="4"/>
<rect x="913" y="104" width="1" height="15"/>
<rect x="916" y="115" width="1" height="4"/>
<rect x="919" y="113" width="1" height="6"/>
<rect x="922" y="115" width="1" height="4"/>
<rect x="925" y="113" width="1" height="6"/>
<rect x="928" y="111" width="1" height="8"/>
<rect x="931" y="113" width="1" height="6"/>
<rect x="934" y="115" width="1" height="4"/>
<rect x="937" y="113" width="1" height="6"/>
<rect x="940" y="115" width="1" height="4"/>
<rect x="943" y="109" width="1" height="10"/>
<rect x="946" y="115" width="1" height="4"/>
<rect x="949" y="113" width="1" height="6"/>
<rect x="952" y="115" width="1" height="4"/>
<rect x="955" y="113" width="1" height="6"/>
<rect x="958" y="111" width="1" height="8"/>
<rect x="961" y="113" width="1" height="6"/>
<rect x="964" y="115" width="1" height="4"/>
<rect x="967" y="113" width="1" height="6"/>
<rect x="970" y="115" width="1" height="4"/>
<rect x="973" y="104" width="1" height="15"/>
<rect x="976" y="115" width="1" height="4"/>
<rect x="979" y="113" width="1" height="6"/>
<rect x="982" y="115" width="1" height="4"/>
<rect x="985" y="113" width="1" height="6"/>
<rect x="988" y="111" width="1" height="8"/>
<rect x="991" y="113" width="1" height="6"/>
<rect x="994" y="115" width="1" height="4"/>
<rect x="997" y="113" width="1" height="6"/>
<rect x="1000" y="115" width="1" height="4"/>
<rect x="1003" y="109" width="1" height="10"/><rect x="207" y="486" width="6" height="1"/>
<rect x="209" y="483" width="4" height="1"/>
<rect x="207" y="480" width="6" height="1"/>
<rect x="205" y="477" width="8" height="1"/>
<rect x="207" y="474" width="6" height="1"/>
<rect x="209" y="471" width="4" height="1"/>
<rect x="207" y="468" width="6" height="1"/>
<rect x="209" y="465" width="4" height="1"/>
<rect x="203" y="462" width="10" height="1"/>
<rect x="209" y="459" width="4" height="1"/>
<rect x="207" y="456" width="6" height="1"/>
<rect x="209" y="453" width="4" height="1"/>
<rect x="207" y="450" width="6" height="1"/>
<rect x="205" y="447" width="8" height="1"/>
<rect x="207" y="444" width="6" height="1"/>
<rect x="209" y="441" width="4" height="1"/>
<rect x="207" y="438" width="6" height="1"/>
<rect x="209" y="435" width="4" height="1"/>
<rect x="198" y="432" width="15" height="1"/>
<rect x="209" y="429" width="4" height="1"/>
<rect x="207" y="426" width="6" height="1"/>
<rect x="209" y="423" width="4" height="1"/>
<rect x="207" y="420" width="6" height="1"/>
<rect x="205" y="417" width="8" height="1"/>
<rect x="207" y="414" width="6" height="1"/>
<rect x="209" y="411" width="4" height="1"/>
<rect x="207" y="408" width="6" height="1"/>
<rect x="209" y="405" width="4" height="1"/>
<rect x="203" y="402" width="10" height="1"/>
<rect x="209" y="399" width="4" height="1"/>
<rect x="207" y="396" width="6" height="1"/>
<rect x="209" y="393" width="4" height="1"/>
<rect x="207" y="390" width="6" height="1"/>
<rect x="205" y="387" width="8" height="1"/>
<rect x="207" y="384" width="6" height="1"/>
<rect x="209" y="381" width="4" height="1"/>
<rect x="207" y="378" width="6" height="1"/>
<rect x="209" y="375" width="4" height="1"/>
<rect x="198" y="372" width="15" height="1"/>
<rect x="209" y="369" width="4" height="1"/>
<rect x="207" y="366" width="6" height="1"/>
<rect x="209" y="363" width="4" height="1"/>
<rect x="207" y="360" width="6" height="1"/>
<rect x="205" y="357" width="8" height="1"/>
<rect x="207" y="354" width="6" height="1"/>
<rect x="209" y="351" width="4" height="1"/>
<rect x="207" y="348" width="6" height="1"/>
<rect x="209" y="345" width="4" height="1"/>
<rect x="203" y="342" width="10" height="1"/>
<rect x="209" y="339" width="4" height="1"/>
<rect x="207" y="336" width="6" height="1"/>
<rect x="209" y="333" width="4" height="1"/>
<rect x="207" y="330" width="6" height="1"/>
<rect x="205" y="327" width="8" height="1"/>
<rect x="207" y="324" width="6" height="1"/>
<rect x="209" y="321" width="4" height="1"/>
<rect x="207" y="318" width="6" height="1"/>
<rect x="209" y="315" width="4" height="1"/>
<rect x="198" y="312" width="15" height="1"/>
<rect x="209" y="309" width="4" height="1"/>
<rect x="207" y="306" width="6" height="1"/>
<rect x="209" y="303" width="4" height="1"/>
<rect x="207" y="300" width="6" height="1"/>
<rect x="205" y="297" width="8" height="1"/>
<rect x="207" y="294" width="6" height="1"/>
<rect x="209" y="291" width="4" height="1"/>
<rect x="207" y="288" width="6" height="1"/>
<rect x="209" y="285" width="4" height="1"/>
<rect x="203" y="282" width="10" height="1"/>
<rect x="209" y="279" width="4" height="1"/>
<rect x="207" y="276" width="6" height="1"/>
<rect x="209" y="273" width="4" height="1"/>
<rect x="207" y="270" width="6" height="1"/>
<rect x="205" y="267" width="8" height="1"/>
<rect x="207" y="264" width="6" height="1"/>
<rect x="209" y="261" width="4" height="1"/>
<rect x="207" y="258" width="6" height="1"/>
<rect x="209" y="255" width="4" height="1"/>
<rect x="198" y="252" width="15" height="1"/>
<rect x="209" y="249" width="4" height="1"/>
<rect x="207" y="246" width="6" height="1"/>
<rect x="209" y="243" width="4" height="1"/>
<rect x="207" y="240" width="6" height="1"/>
<rect x="205" y="237" width="8" height="1"/>
<rect x="207" y="234" width="6" height="1"/>
<rect x="209" y="231" width="4" height="1"/>
<rect x="207" y="228" width="6" height="1"/>
<rect x="209" y="225" width="4" height="1"/>
<rect x="203" y="222" width="10" height="1"/>
<rect x="209" y="219" width="4" height="1"/>
<rect x="207" y="216" width="6" height="1"/>
<rect x="209" y="213" width="4" height="1"/>
<rect x="207" y="210" width="6" height="1"/>
<rect x="205" y="207" width="8" height="1"/>
<rect x="207" y="204" width="6" height="1"/>
<rect x="209" y="201" width="4" height="1"/>
<rect x="207" y="198" width="6" height="1"/>
<rect x="209" y="195" width="4" height="1"/>
<rect x="198" y="192" width="15" height="1"/>
<rect x="209" y="189" width="4" height="1"/>
<rect x="207" y="186" width="6" height="1"/>
<rect x="209" y="183" width="4" height="1"/>
<rect x="207" y="180" width="6" height="1"/>
<rect x="205" y="177" width="8" height="1"/>
<rect x="207" y="174" width="6" height="1"/>
<rect x="209" y="171" width="4" height="1"/>
<rect x="207" y="168" width="6" height="1"/>
<rect x="209" y="165" width="4" height="1"/>
<rect x="203" y="162" width="10" height="1"/>
<rect x="209" y="159" width="4" height="1"/>
<rect x="207" y="156" width="6" height="1"/>
<rect x="209" y="153" width="4" height="1"/>
<rect x="207" y="150" width="6" height="1"/>
<rect x="205" y="147" width="8" height="1"/>
<rect x="207" y="144" width="6" height="1"/>
<rect x="209" y="141" width="4" height="1"/>
<rect x="207" y="138" width="6" height="1"/>
<rect x="209" y="135" width="4" height="1"/>
<rect x="198" y="132" width="15" height="1"/>
<rect x="209" y="129" width="4" height="1"/>
<rect x="207" y="126" width="6" height="1"/>
<rect x="209" y="123" width="4" height="1"/>
<rect x="207" y="120" width="6" height="1"/></g><g fill="#0000FF"><rect x="205" y="104" width="1" height="1"/><rect x="205" y="106" width="1" height="1"/><rect x="205" y="108" width="1" height="1"/><rect x="205" y="114" width="1" height="1"/><rect x="205" y="116" width="1" height="1"/><rect x="205" y="118" width="1" height="1"/><rect x="198" y="111" width="1" height="1"/><rect x="200" y="111" width="1" height="1"/><rect x="202" y="111" width="1" height="1"/><rect x="208" y="111" width="1" height="1"/><rect x="210" y="111" width="1" height="1"/><rect x="212" y="111" width="1" height="1"/><rect x="204" y="110" width="1" height="1"/><rect x="206" y="110" width="1" height="1"/><rect x="204" y="112" width="1" height="1"/><rect x="206" y="112" width="1" height="1"/></g><g fill="#000" font-family="Liberation Sans" font-size="9.8" letter-spacing="-0.6" stroke="#000" stroke-width="0.15"><text x="255.2" y="111.9">-20</text>
<text x="315.2" y="111.9">0</text>
<text x="375.2" y="111.9">20</text>
<text x="435.2" y="111.9">40</text>
<text x="495.2" y="111.9">60</text>
<text x="555.2" y="111.9">80</text>
<text x="615.2" y="111.9">100</text>
<text x="675.2" y="111.9">120</text>
<text x="735.2" y="111.9">140</text>
<text x="795.2" y="111.9">160</text>
<text x="855.2" y="111.9">180</text>
<text x="915.2" y="111.9">200</text>
<text x="975.2" y="111.9">220</text><text transform="translate(207.8,434.5) rotate(-90)" text-anchor="end">200</text>
<text transform="translate(207.8,374.5) rotate(-90)" text-anchor="end">220</text>
<text transform="translate(207.8,314.5) rotate(-90)" text-anchor="end">240</text>
<text transform="translate(207.8,254.5) rotate(-90)" text-anchor="end">260</text>
<text transform="translate(207.8,194.5) rotate(-90)" text-anchor="end">280</text>
<text transform="translate(207.8,134.5) rotate(-90)" text-anchor="end">300</text></g></g>
  <g fill="#707070"></g>
  <g font-family="Liberation Sans" font-size="9" fill="#000"></g>
  <rect x="213" y="104" width="1" height="383" fill="#000"/>
  <rect x="198" y="119" width="807" height="1" fill="#000"/>
  <linearGradient id="cvg" x1="0" y1="0" x2="0" y2="1"><stop offset="0" stop-color="#8E98AD"/><stop offset="1" stop-color="#8690A6"/></linearGradient>
  <linearGradient id="cvl" x1="0" y1="0" x2="0" y2="1"><stop offset="0" stop-color="#283246" stop-opacity="0"/><stop offset="0.4" stop-color="#283246" stop-opacity="0.02"/><stop offset="1" stop-color="#283246" stop-opacity="0.14"/></linearGradient>
  <rect x="214" y="120" width="791" height="367" fill="url(#cvg)"/>
  <rect x="214" y="120" width="100" height="367" fill="url(#cvl)"/>
  <defs><linearGradient id="shR" x1="0" y1="0" x2="1" y2="0"><stop offset="0" stop-color="#5E6678"/><stop offset="1" stop-color="#8892A9" stop-opacity="0"/></linearGradient>
<linearGradient id="shT" x1="0" y1="1" x2="0" y2="0"><stop offset="0" stop-color="#7A849A"/><stop offset="1" stop-color="#8892A9" stop-opacity="0"/></linearGradient></defs>
  <filter id="blr" x="-10%" y="-10%" width="120%" height="120%"><feGaussianBlur stdDeviation="3.5"/></filter>
  <rect x="311" y="133" width="639" height="400" fill="#5A6376" opacity="0.55" filter="url(#blr)"/>
  <rect x="944" y="138" width="8" height="360" fill="url(#shR)" opacity="0.6"/>
  <rect x="313" y="135" width="631" height="360" fill="#000"/>
  <rect x="314" y="136" width="629" height="360" fill="#fff"/>
  <g stroke="#BABABA" stroke-width="1"><line x1="328.5" y1="136" x2="328.5" y2="488" stroke-dasharray="2 2"/>
<line x1="343.5" y1="136" x2="343.5" y2="488" stroke-dasharray="1 1"/>
<line x1="358.5" y1="136" x2="358.5" y2="488" stroke-dasharray="2 2"/>
<line x1="373.5" y1="136" x2="373.5" y2="488" stroke-dasharray="2 2"/>
<line x1="388.5" y1="136" x2="388.5" y2="488" stroke-dasharray="2 2"/>
<line x1="403.5" y1="136" x2="403.5" y2="488" stroke-dasharray="1 1"/>
<line x1="418.5" y1="136" x2="418.5" y2="488" stroke-dasharray="2 2"/>
<line x1="433.5" y1="136" x2="433.5" y2="488" stroke-dasharray="2 2"/>
<line x1="448.5" y1="136" x2="448.5" y2="488" stroke-dasharray="2 2"/>
<line x1="463.5" y1="136" x2="463.5" y2="488" stroke-dasharray="1 1"/>
<line x1="478.5" y1="136" x2="478.5" y2="488" stroke-dasharray="2 2"/>
<line x1="493.5" y1="136" x2="493.5" y2="488" stroke-dasharray="2 2"/>
<line x1="508.5" y1="136" x2="508.5" y2="488" stroke-dasharray="2 2"/>
<line x1="523.5" y1="136" x2="523.5" y2="488" stroke-dasharray="1 1"/>
<line x1="538.5" y1="136" x2="538.5" y2="488" stroke-dasharray="2 2"/>
<line x1="553.5" y1="136" x2="553.5" y2="488" stroke-dasharray="2 2"/>
<line x1="568.5" y1="136" x2="568.5" y2="488" stroke-dasharray="2 2"/>
<line x1="583.5" y1="136" x2="583.5" y2="488" stroke-dasharray="1 1"/>
<line x1="598.5" y1="136" x2="598.5" y2="488" stroke-dasharray="2 2"/>
<line x1="613.5" y1="136" x2="613.5" y2="488" stroke-dasharray="2 2"/>
<line x1="628.5" y1="136" x2="628.5" y2="488" stroke-dasharray="2 2"/>
<line x1="643.5" y1="136" x2="643.5" y2="488" stroke-dasharray="1 1"/>
<line x1="658.5" y1="136" x2="658.5" y2="488" stroke-dasharray="2 2"/>
<line x1="673.5" y1="136" x2="673.5" y2="488" stroke-dasharray="2 2"/>
<line x1="688.5" y1="136" x2="688.5" y2="488" stroke-dasharray="2 2"/>
<line x1="703.5" y1="136" x2="703.5" y2="488" stroke-dasharray="1 1"/>
<line x1="718.5" y1="136" x2="718.5" y2="488" stroke-dasharray="2 2"/>
<line x1="733.5" y1="136" x2="733.5" y2="488" stroke-dasharray="2 2"/>
<line x1="748.5" y1="136" x2="748.5" y2="488" stroke-dasharray="2 2"/>
<line x1="763.5" y1="136" x2="763.5" y2="488" stroke-dasharray="1 1"/>
<line x1="778.5" y1="136" x2="778.5" y2="488" stroke-dasharray="2 2"/>
<line x1="793.5" y1="136" x2="793.5" y2="488" stroke-dasharray="2 2"/>
<line x1="808.5" y1="136" x2="808.5" y2="488" stroke-dasharray="2 2"/>
<line x1="823.5" y1="136" x2="823.5" y2="488" stroke-dasharray="1 1"/>
<line x1="838.5" y1="136" x2="838.5" y2="488" stroke-dasharray="2 2"/>
<line x1="853.5" y1="136" x2="853.5" y2="488" stroke-dasharray="2 2"/>
<line x1="868.5" y1="136" x2="868.5" y2="488" stroke-dasharray="2 2"/>
<line x1="883.5" y1="136" x2="883.5" y2="488" stroke-dasharray="1 1"/>
<line x1="898.5" y1="136" x2="898.5" y2="488" stroke-dasharray="2 2"/>
<line x1="913.5" y1="136" x2="913.5" y2="488" stroke-dasharray="2 2"/>
<line x1="928.5" y1="136" x2="928.5" y2="488" stroke-dasharray="2 2"/>
<line x1="314" y1="147.5" x2="943" y2="147.5" stroke-dasharray="2 2"/>
<line x1="314" y1="162.5" x2="943" y2="162.5" stroke-dasharray="1 1"/>
<line x1="314" y1="177.5" x2="943" y2="177.5" stroke-dasharray="2 2"/>
<line x1="314" y1="192.5" x2="943" y2="192.5" stroke-dasharray="2 2"/>
<line x1="314" y1="207.5" x2="943" y2="207.5" stroke-dasharray="2 2"/>
<line x1="314" y1="222.5" x2="943" y2="222.5" stroke-dasharray="1 1"/>
<line x1="314" y1="237.5" x2="943" y2="237.5" stroke-dasharray="2 2"/>
<line x1="314" y1="252.5" x2="943" y2="252.5" stroke-dasharray="2 2"/>
<line x1="314" y1="267.5" x2="943" y2="267.5" stroke-dasharray="2 2"/>
<line x1="314" y1="282.5" x2="943" y2="282.5" stroke-dasharray="1 1"/>
<line x1="314" y1="297.5" x2="943" y2="297.5" stroke-dasharray="2 2"/>
<line x1="314" y1="312.5" x2="943" y2="312.5" stroke-dasharray="2 2"/>
<line x1="314" y1="327.5" x2="943" y2="327.5" stroke-dasharray="2 2"/>
<line x1="314" y1="342.5" x2="943" y2="342.5" stroke-dasharray="1 1"/>
<line x1="314" y1="357.5" x2="943" y2="357.5" stroke-dasharray="2 2"/>
<line x1="314" y1="372.5" x2="943" y2="372.5" stroke-dasharray="2 2"/>
<line x1="314" y1="387.5" x2="943" y2="387.5" stroke-dasharray="2 2"/>
<line x1="314" y1="402.5" x2="943" y2="402.5" stroke-dasharray="1 1"/>
<line x1="314" y1="417.5" x2="943" y2="417.5" stroke-dasharray="2 2"/>
<line x1="314" y1="432.5" x2="943" y2="432.5" stroke-dasharray="2 2"/>
<line x1="314" y1="447.5" x2="943" y2="447.5" stroke-dasharray="2 2"/>
<line x1="314" y1="462.5" x2="943" y2="462.5" stroke-dasharray="1 1"/>
<line x1="314" y1="477.5" x2="943" y2="477.5" stroke-dasharray="2 2"/></g>
  <g font-family="Liberation Sans"><rect x="373.5" y="162.5" width="113" height="68" fill="#fff"/>
<rect x="373.5" y="162.5" width="113" height="21" fill="#C8C8C8"/>
<text x="430.0" y="176" text-anchor="middle" fill="#222" font-size="10.5">Perekonnaseisud</text>
<line x1="373" y1="183.5" x2="487" y2="183.5" stroke="#111" stroke-width="1.3"/>
<line x1="373" y1="207" x2="487" y2="207" stroke="#555" stroke-width="2"/>
<line x1="399.5" y1="183" x2="399.5" y2="230" stroke="#444" stroke-width="1.6"/>
<rect x="373.5" y="162.5" width="113" height="68" fill="none" stroke="#111" stroke-width="1.3"/>
<text x="377.5" y="197" font-weight="bold" font-size="10.5">PK</text>
<text x="404" y="197" font-weight="bold" font-size="10.5">PereSeisID</text>
<rect x="404" y="199" width="54.9" height="1" fill="#222"/>
<text x="377.5" y="222.5" font-size="10.5" font-weight="bold">U1</text>
<text x="404" y="222.5" font-size="10.5" font-weight="bold">Perekonnaseis</text>
<rect x="553.5" y="162.5" width="105" height="68" fill="#fff"/>
<rect x="553.5" y="162.5" width="105" height="21" fill="#C8C8C8"/>
<text x="606.0" y="176" text-anchor="middle" fill="#222" font-size="10.5">Kodakontsus</text>
<line x1="553" y1="183.5" x2="659" y2="183.5" stroke="#111" stroke-width="1.3"/>
<line x1="553" y1="207" x2="659" y2="207" stroke="#555" stroke-width="2"/>
<line x1="579.5" y1="183" x2="579.5" y2="230" stroke="#444" stroke-width="1.6"/>
<rect x="553.5" y="162.5" width="105" height="68" fill="none" stroke="#111" stroke-width="1.3"/>
<text x="557.5" y="197" font-weight="bold" font-size="10.5">PK</text>
<text x="584" y="197" font-weight="bold" font-size="10.5">KodakID</text>
<rect x="584" y="199" width="42.6" height="1" fill="#222"/>
<text x="557.5" y="222.5" font-size="10.5" font-weight="bold">U1</text>
<text x="584" y="222.5" font-size="10.5" font-weight="bold">Kodakontsus</text>
<rect x="704.5" y="162.5" width="120" height="169" fill="#fff"/>
<rect x="704.5" y="162.5" width="120" height="21" fill="#C8C8C8"/>
<text x="764.5" y="176" text-anchor="middle" fill="#222" font-size="10.5">Inimesed</text>
<line x1="704" y1="183.5" x2="825" y2="183.5" stroke="#111" stroke-width="1.3"/>
<line x1="704" y1="204" x2="825" y2="204" stroke="#555" stroke-width="2"/>
<line x1="737" y1="183" x2="737" y2="331" stroke="#444" stroke-width="1.6"/>
<rect x="704.5" y="162.5" width="120" height="169" fill="none" stroke="#111" stroke-width="1.3"/>
<text x="708.5" y="197" font-weight="bold" font-size="10.5">PK</text>
<text x="741" y="197" font-weight="bold" font-size="10.5">InimeneID</text>
<rect x="741" y="199" width="50.2" height="1" fill="#222"/>
<text x="708.5" y="222.5" font-size="10.5" font-weight="bold">I3,I2</text>
<text x="741" y="222.5" font-size="10.5" font-weight="bold">Eesnimi</text>
<text x="708.5" y="235.2" font-size="10.5" font-weight="bold">I3,I2</text>
<text x="741" y="235.2" font-size="10.5" font-weight="bold">Perekonnanimi</text>
<text x="708.5" y="247.8" font-size="10.5" fill="#2A2A2A">I1</text>
<text x="741" y="247.8" font-size="10.5" fill="#2A2A2A">Synniaeg</text>
<text x="741" y="260.5" font-size="10.5" font-weight="bold">Sugu</text>
<text x="741" y="273.2" font-size="10.5" fill="#2A2A2A">Isikukood</text>
<text x="708.5" y="285.9" font-size="10.5" font-weight="bold">FK1</text>
<text x="741" y="285.9" font-size="10.5" font-weight="bold">KodakID</text>
<text x="708.5" y="298.5" font-size="10.5" fill="#2A2A2A">FK2</text>
<text x="741" y="298.5" font-size="10.5" fill="#2A2A2A">PereSeisID</text>
<text x="708.5" y="311.2" font-size="10.5" fill="#2A2A2A">FK3</text>
<text x="741" y="311.2" font-size="10.5" fill="#2A2A2A">IsaID</text>
<text x="708.5" y="323.9" font-size="10.5" fill="#2A2A2A">FK4</text>
<text x="741" y="323.9" font-size="10.5" fill="#2A2A2A">EmaID</text>
<rect x="384.5" y="327.5" width="79" height="68" fill="#fff"/>
<rect x="384.5" y="327.5" width="79" height="21" fill="#C8C8C8"/>
<text x="424.0" y="340.5" text-anchor="middle" fill="#222" font-size="10.5">ByrooKohad</text>
<line x1="384" y1="348.5" x2="464" y2="348.5" stroke="#111" stroke-width="1.3"/>
<line x1="384" y1="372" x2="464" y2="372" stroke="#555" stroke-width="2"/>
<line x1="410.5" y1="348" x2="410.5" y2="395" stroke="#444" stroke-width="1.6"/>
<rect x="384.5" y="327.5" width="79" height="68" fill="none" stroke="#111" stroke-width="1.3"/>
<text x="388.3" y="361.5" font-weight="bold" font-size="10.5">PK</text>
<text x="415" y="361.5" font-weight="bold" font-size="10.5">ByrooID</text>
<rect x="415" y="363.5" width="40.8" height="1" fill="#222"/>
<text x="415" y="386.7" font-size="10.5" font-weight="bold">Nimetus</text>
<rect x="556.5" y="312.5" width="102" height="156" fill="#fff"/>
<rect x="556.5" y="312.5" width="102" height="21" fill="#C8C8C8"/>
<text x="607.5" y="326" text-anchor="middle" fill="#222" font-size="10.5">Abielu</text>
<line x1="556" y1="333.5" x2="659" y2="333.5" stroke="#111" stroke-width="1.3"/>
<line x1="556" y1="354" x2="659" y2="354" stroke="#555" stroke-width="2"/>
<line x1="587" y1="333" x2="587" y2="468" stroke="#444" stroke-width="1.6"/>
<rect x="556.5" y="312.5" width="102" height="156" fill="none" stroke="#111" stroke-width="1.3"/>
<text x="560.5" y="346.7" font-weight="bold" font-size="10.5">PK</text>
<text x="591" y="346.7" font-weight="bold" font-size="10.5">AbieluID</text>
<rect x="591" y="348.7" width="42.6" height="1" fill="#222"/>
<text x="560.5" y="373.5" font-size="10.5" font-weight="bold">I1</text>
<text x="591" y="373.5" font-size="10.5" font-weight="bold">Aeg</text>
<text x="560.5" y="386.2" font-size="10.5" font-weight="bold">FK1</text>
<text x="591" y="386.2" font-size="10.5" font-weight="bold">ByrooID</text>
<text x="560.5" y="398.8" font-size="10.5" font-weight="bold">FK3</text>
<text x="591" y="398.8" font-size="10.5" font-weight="bold">PruutID</text>
<text x="591" y="411.5" font-size="10.5" fill="#2A2A2A">VanaPrNimi</text>
<text x="591" y="424.2" font-size="10.5" fill="#2A2A2A">VanaPgNimi</text>
<text x="591" y="436.9" font-size="10.5" font-weight="bold">Kehtib</text>
<text x="591" y="449.5" font-size="10.5" fill="#2A2A2A">InimeneID</text>
<text x="560.5" y="462.2" font-size="10.5" font-weight="bold">FK2</text>
<text x="591" y="462.2" font-size="10.5" font-weight="bold">PeigmeesID</text>
<path d="M704 196.5H668" fill="none" stroke="#000" stroke-width="1.2"/>
<path d="M659 196.5L669 191.5L669 201.5Z"/>
<path d="M704 269.5H476.5V240" fill="none" stroke="#000" stroke-width="1.2"/>
<path d="M476.5 231L471.5 241L481.5 241Z"/>
<path d="M782.5 162V147.5H747V153" fill="none" stroke="#222" stroke-width="1.2"/>
<path d="M747 162.5L742 152.5L752 152.5Z"/>
<path d="M556 361.5H473" fill="none" stroke="#000" stroke-width="1.2"/>
<path d="M464 361.5L474 356.5L474 366.5Z"/>
<path d="M658 375.5H805.5V342" fill="none" stroke="#000" stroke-width="1.2"/>
<path d="M805.5 332.5L800.5 342.5L810.5 342.5Z"/>
<path d="M658 407.5H723.5V342" fill="none" stroke="#000" stroke-width="1.2"/>
<path d="M723.5 332.5L718.5 342.5L728.5 342.5Z"/>
<path d="M782.5 332V347H747V342" fill="none" stroke="#444" stroke-width="1.5"/>
<path d="M747 332.5L742 342.5L752 342.5Z"/></g>
</svg>
<!-- vertical scrollbar -->
<div class="a" style="left:1005px;top:103px;width:19px;height:384px;background:linear-gradient(90deg,#F3F1EC,#FEFEFB 85%,#F4F2EA)"></div>
<div class="a" style="left:1006px;top:104px;width:15px;height:15px;background:linear-gradient(135deg,#D3E0FC,#B8CCF7);border:1px solid #fff;border-radius:2px;box-shadow:0 1px 0 #A8BFEA"></div>
<div class="a" style="left:1006px;top:220px;width:15px;height:61px;background:linear-gradient(90deg,#B8CDF8,#CADAFB);border:1px solid #fff;border-radius:2px;box-shadow:1px 1px 0 #A8BFEA"></div>

<div class="a" style="left:1006px;top:470px;width:15px;height:16px;background:linear-gradient(135deg,#D3E0FC,#B8CCF7);border:1px solid #fff;border-radius:2px;box-shadow:1px 1px 0 #A8BFEA"></div>
<svg class="a" style="left:1005px;top:104px" width="17" height="383" viewBox="1005 104 17 383">
 <path d="M1010 114.5L1013.5 111L1017 114.5" stroke="#4D6185" stroke-width="2" fill="none"/>
 <path d="M1010 476L1013.5 479.5L1017 476" stroke="#4D6185" stroke-width="2" fill="none"/>
 <path d="M1010 247.5h7M1010 249.5h7M1010 251.5h7M1010 253.5h7" stroke="#EEF4FE"/>
 <path d="M1010 248.5h7M1010 250.5h7M1010 252.5h7M1010 254.5h7" stroke="#8FA9DE"/>
</svg>

<!-- page nav / hscroll row -->
<div class="a" style="left:197px;top:487px;width:398px;height:17px;background:linear-gradient(#C9DDFA,#DDE9FC);border-top:1px solid #4A7ED6"></div>
<div class="a" style="left:197px;top:487px;width:67px;height:17px;background:#BED9FD;border-top:1px solid #4A7ED6"></div>
<div class="a" style="left:197px;top:503px;width:825px;height:2px;background:#F2F0E8"></div>
<svg class="a" style="left:197px;top:487px" width="140" height="17" viewBox="197 487 140 17">
  <path d="M203 492h2v8h-2zM211 492v8l-5.5-4z M226.5 492v8l-5.5-4z M238 492v8l5.5-4z M254 492v8l5.5-4z M260 492h2v8h-2z" fill="#000"/>
  <rect x="264" y="488" width="1" height="15" fill="#8D8D8D"/>
  <path d="M266.5 487.5V500.5Q266.5 503.5 269.5 503.5H318.5L332.5 487.5" fill="#fff" stroke="#4A7ED6" stroke-width="1"/>
  <text x="274" y="500" font-family="Liberation Sans" font-weight="bold" font-size="11.5">Page-1</text>
</svg>
<div class="a" style="left:595px;top:487px;width:6px;height:16px;background:#ECE9D8;border-left:1px solid #fff;border-right:2px solid #716F64;border-bottom:1px solid #716F64"></div>
<div class="a" style="left:601px;top:487px;width:404px;height:16px;background:linear-gradient(#EEEDE5,#F5F4EF 30%,#FEFEFB 80%,#EDEBE4)"></div>
<div class="a" style="left:602px;top:488px;width:15px;height:15px;background:linear-gradient(135deg,#D3E0FC,#B8CCF7);border:1px solid #fff;border-radius:2px;box-shadow:1px 1px 0 #A8BFEA"></div>
<svg class="a" style="left:606px;top:491px" width="8" height="9"><path d="M5.5 1L2 4.5L5.5 8" stroke="#4D6185" stroke-width="2" fill="none"/></svg>
<div class="a" style="left:716px;top:488px;width:165px;height:15px;background:linear-gradient(#C8D8FC,#BACDF8);border:1px solid #fff;border-radius:2px;box-shadow:1px 1px 0 #A8BFEA"></div>
<div class="a" style="left:794px;top:493px;width:8px;height:6px;background:repeating-linear-gradient(90deg,#EEF4FE 0 1px,#8FA9DE 1px 2px)"></div>
<div class="a" style="left:988px;top:488px;width:15px;height:15px;background:linear-gradient(135deg,#D3E0FC,#B8CCF7);border:1px solid #fff;border-radius:2px;box-shadow:1px 1px 0 #A8BFEA"></div>
<svg class="a" style="left:992px;top:491px" width="8" height="9"><path d="M2.5 1L6 4.5L2.5 8" stroke="#4D6185" stroke-width="2" fill="none"/></svg>
<div class="a" style="left:1005px;top:487px;width:19px;height:16px;background:#ECE9D8"></div>
<div class="a" style="left:197px;top:505px;width:825px;height:5px;background:#BCD5F8"></div>

<!-- DATABASE PROPERTIES PANE -->
<div class="a" style="left:199px;top:510px;width:21px;height:202px;background:linear-gradient(90deg,#E4EEFD,#C7DBF9)"></div>
<div class="a" style="left:220px;top:510px;width:801px;height:202px;background:#ECE9D8"></div>
<div class="t" style="left:222px;top:514px">Categories:</div>
<div class="a" style="left:220px;top:528px;width:112px;height:184px;background:#fff;border:1px solid #000;box-shadow:inset 2px 2px 0 #ACA899"></div>
<div class="t" style="left:239px;top:533px">Information</div>
<svg class="a" style="left:225px;top:532px" width="12" height="12"><path d="M1.5 4.5H5.5V1.5L10.5 6L5.5 10.5V7.5H1.5Z" fill="#F4F0E0" stroke="#000"/></svg>
<div class="t" style="left:215px;top:515px;transform-origin:0 0;transform:rotate(90deg);font-weight:bold;font-size:12px;color:#1E4C9C">Database Properties</div>
<svg class="a" style="left:204px;top:698px" width="10" height="10"><path d="M1.5 1.5L8.5 8.5M8.5 1.5L1.5 8.5" stroke="#1E4C9C" stroke-width="1.5"/></svg>
<div class="t" style="left:639px;top:612px">No Properties</div>
<div class="a" style="left:343px;top:529px;width:673px;height:1px;background:#ACA899;box-shadow:0 1px 0 #fff"></div>
<div class="a" style="left:343px;top:709px;width:673px;height:1px;background:#ACA899;box-shadow:0 1px 0 #fff"></div>

<!-- STATUS BAR -->
<div class="a" style="left:0;top:712px;width:1024px;height:26px;background:#BED9FD"></div>
<div class="a" style="left:3px;top:719px;width:150px;height:17px;border:1px solid #A8C8F2"></div>
<div class="a" style="left:158px;top:719px;width:151px;height:17px;border:1px solid #A8C8F2"></div>
<div class="a" style="left:313px;top:719px;width:150px;height:17px;border:1px solid #A8C8F2"></div>
<div class="a" style="left:468px;top:719px;width:149px;height:17px;border:1px solid #A8C8F2"></div>
<div class="a" style="left:903px;top:719px;width:100px;height:17px;border:1px solid #A8C8F2"></div>
<div class="t" style="left:931px;top:723px">Page 1/1</div>

<!-- TASKBAR -->
<div class="a" style="left:0;top:738px;width:1024px;height:30px;background:linear-gradient(#3168D5 0,#4993E6 2px,#2663E0 5px,#245EDC 50%,#2157D2 90%,#1941A5 100%)"></div>
<div class="a" style="left:0;top:738px;width:96px;height:30px;border-radius:0 12px 12px 0;background:linear-gradient(#3C913C,#3AA23A 20%,#318E31 70%,#2A7A2A)"></div>
<div class="t" style="left:34px;top:745px;color:#fff;font-weight:bold;font-style:italic;font-size:17px;text-shadow:1px 1px 1px #1A4A1A">start</div>
<svg class="a" style="left:10px;top:743px" width="21" height="19" viewBox="0 0 21 19">
 <path d="M3 2.5Q6 1 11 2.5L9.5 8.5Q5 7 1.5 8.5Z" fill="#E8501A"/>
 <path d="M12 2.8Q16 4 20 2.8L18.5 9Q14.5 10 10.5 8.8Z" fill="#70C020"/>
 <path d="M1.3 9.5Q5 8 9.3 9.5L8 15.5Q4 14 0 15.5Z" fill="#3A80F0"/>
 <path d="M10.3 9.8Q14.5 11 18.3 9.8L17 16Q13 17 9 15.8Z" fill="#F8C020"/>
</svg>
<div class="a" style="left:895px;top:738px;width:129px;height:30px;background:linear-gradient(#0C5AD0 0,#1AA0F0 2px,#1290E8 6px,#0F8FE6 50%,#0D88E0 90%,#0A6ACF);border-left:1px solid #0A4FB8;box-shadow:inset 1px 0 0 #1BB0F5"></div>
<div class="t" style="left:986px;top:748px;color:#fff">9:48</div>
<div class="a" style="left:107px;top:741px;width:158px;height:24px;border-radius:3px;background:linear-gradient(#4F92F6,#3C81F3 20%,#3876EC 80%,#2F66DA);border:1px solid #1F55C8"></div>
<div class="a" style="left:267px;top:741px;width:158px;height:24px;border-radius:3px;background:linear-gradient(#4F92F6,#3C81F3 20%,#3876EC 80%,#2F66DA);border:1px solid #1F55C8"></div>
<div class="a" style="left:427px;top:741px;width:158px;height:24px;border-radius:3px;background:linear-gradient(#1E4CB8,#1F4FC0 20%,#2153C6 80%,#2457CC);border:1px solid #1840A0"></div>
<div class="t" style="left:136px;top:748px;color:#fff">Web Platform Installe...</div>
<div class="t" style="left:295px;top:748px;color:#fff;font-size:10.7px">My Documents</div>
<div class="t" style="left:457px;top:748px;color:#fff;font-size:10.8px">AbieludeBaas.vsd - M...</div>
<svg class="a" style="left:117px;top:746px" width="15" height="15"><circle cx="7" cy="7" r="6.5" fill="#A0501A" stroke="#6A3008"/><circle cx="6" cy="5.5" r="3" fill="#D08040" opacity=".6"/><path d="M7 3.5V9M4.5 7L7 10L9.5 7" stroke="#fff" stroke-width="1.8" fill="none"/></svg>
<svg class="a" style="left:276px;top:745px" width="17" height="16"><rect x="2.5" y="4.5" width="13" height="10" fill="#F2C460" stroke="#8A6010"/><rect x="4.5" y="1.5" width="9" height="8" fill="#fff" stroke="#6A7A90"/><path d="M6 4h6M6 6h6" stroke="#6A7A90"/><rect x="2.5" y="9.5" width="13" height="5" fill="#F8D070" stroke="#8A6010"/></svg>
<svg class="a" style="left:434.5px;top:742px" width="20" height="20" viewBox="0 0 20 20">
    <path d="M2.5 7L6 4.5H15.5V6.5H5.5V17.5H2.5Z" fill="#E8EEFF" stroke="#C8D4F8" stroke-width="0.6"/>
    <rect x="4" y="7" width="1.6" height="9" fill="#5A70E0"/>
    <rect x="5.5" y="7" width="11.5" height="11.5" fill="#fff"/>
    <circle cx="9" cy="10" r="1.6" fill="#4A50C8"/>
    <circle cx="8.4" cy="12.4" r="0.8" fill="#4A50C8"/>
    <circle cx="8.4" cy="14.5" r="0.8" fill="#4A50C8"/><circle cx="10.5" cy="14.5" r="0.7" fill="#6A70D8"/>
    <path d="M13.4 12.8L15.2 14.7L13.4 16.6L11.6 14.7Z" fill="#4A50C8"/>
  </svg>
<div class="a" style="left:720px;top:745px;width:15px;height:14px;background:#3A6FDA"></div>
<div class="t" style="left:721px;top:748px;color:#fff">ET</div>
<div class="a" style="left:740px;top:742px;width:108px;height:20px;background:#fff;border:1px solid #7F9DB9"></div>
<div class="t" style="left:744px;top:747px;color:#9A9A9A;font-size:11px">Search Desktop</div>
<div class="a" style="left:849px;top:742px;width:24px;height:20px;background:linear-gradient(#F4F6FA,#D8DEE8);border:1px solid #9AAAC4"></div>
<svg class="a" style="left:853px;top:744px" width="16" height="16"><circle cx="9" cy="6.5" r="4" fill="#DDEBFA" stroke="#2F5CA8" stroke-width="1.5"/><path d="M6 9.5L2.5 13" stroke="#2F5CA8" stroke-width="2.2"/></svg>
<svg class="a" style="left:905px;top:744px" width="72" height="18">
 <circle cx="11" cy="6.5" r="4.5" fill="#DDEBFA" stroke="#E8F0FF" stroke-width="1.5"/><path d="M7.5 10L3 14.5" stroke="#E8F0FF" stroke-width="2.5"/>
 <rect x="21" y="2" width="9" height="8" fill="#3A4A8A" stroke="#C8D0E8"/><rect x="24" y="6" width="9" height="8" fill="#5A6AAA" stroke="#C8D0E8"/><path d="M29 10L35 16M35 10L29 16" stroke="#E02020" stroke-width="2"/>
 <path d="M38 3H54L46 16Z" fill="#1010C0" stroke="#000"/><path d="M41 6H51M43 9H49" stroke="#fff" stroke-width="1.2"/>
 <circle cx="62" cy="8" r="6" fill="#9AA0AC" stroke="#505660"/><circle cx="61" cy="8" r="2.5" fill="#D0D4DC"/><path d="M64 16L70 11" stroke="#A0B8F0"/>
</svg>

</body></html>
